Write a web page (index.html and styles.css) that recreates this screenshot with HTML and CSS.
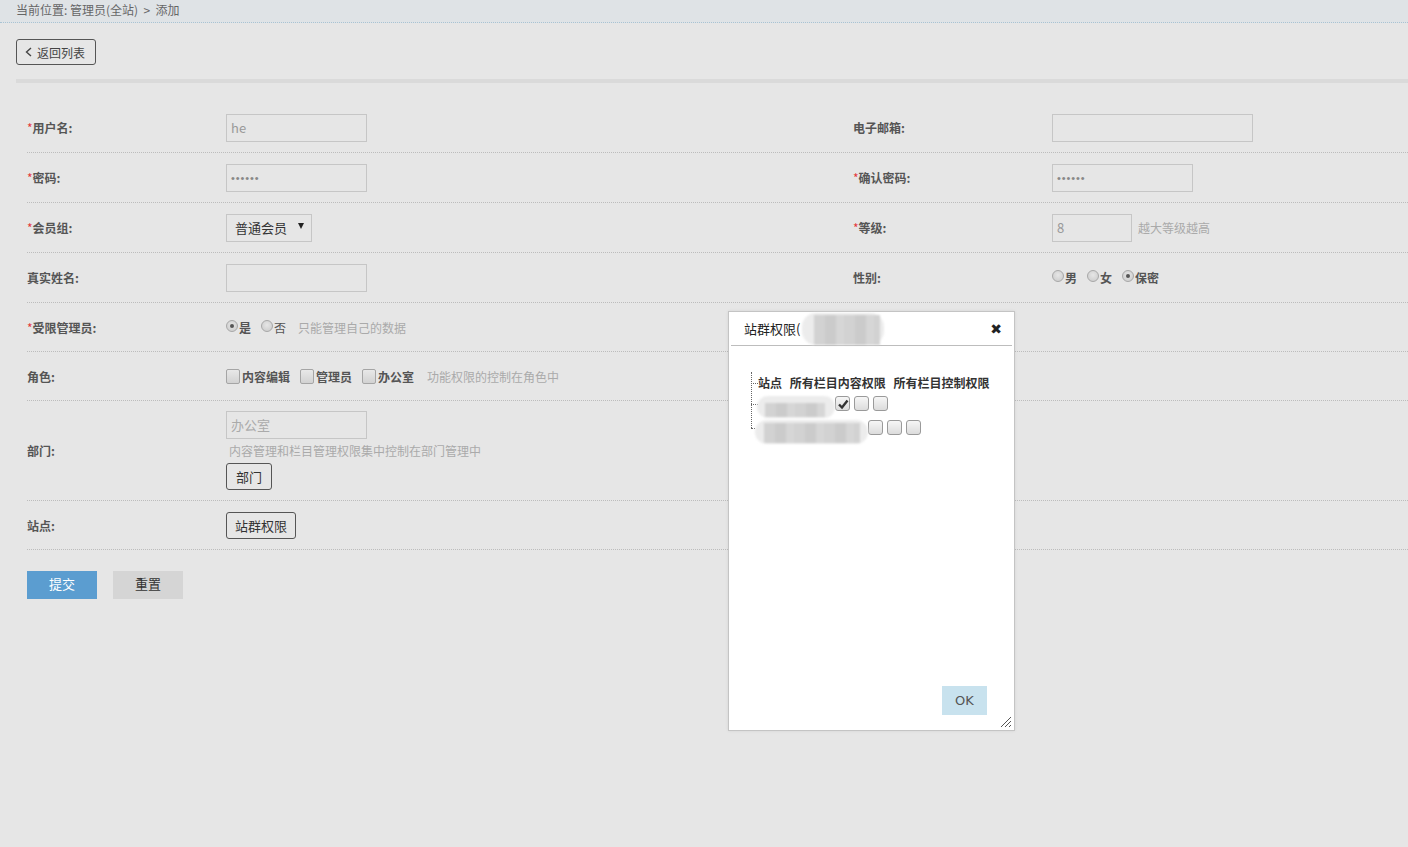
FILE: index.html
```html
<!DOCTYPE html>
<html lang="zh-CN">
<head>
<meta charset="utf-8">
<title>添加管理员</title>
<link rel="stylesheet" href="styles.css">
</head>
<body>
<div class="crumb">当前位置: 管理员(全站) &nbsp;&gt;&nbsp; 添加</div>
<div class="page">
  <div class="toolbar">
    <span class="btn-back"><svg class="chev" width="7" height="10" viewBox="0 0 7 10"><polyline points="6,1 1.5,5 6,9" fill="none" stroke="#444" stroke-width="1.4"/></svg>返回列表</span>
  </div>
  <div class="divider"></div>
  <div class="form">
    <div class="row h50">
      <div class="lbl"><i>*</i>用户名:</div>
      <div class="fld"><span class="inp w141">he</span></div>
      <div class="lbl">电子邮箱:</div>
      <div class="fld"><span class="inp w201"></span></div>
    </div>
    <div class="row h50">
      <div class="lbl"><i>*</i>密码:</div>
      <div class="fld"><span class="inp w141 pwd">••••••</span></div>
      <div class="lbl"><i>*</i>确认密码:</div>
      <div class="fld"><span class="inp w141 pwd">••••••</span></div>
    </div>
    <div class="row h50">
      <div class="lbl"><i>*</i>会员组:</div>
      <div class="fld"><span class="sel">普通会员<span class="arrow"></span></span></div>
      <div class="lbl"><i>*</i>等级:</div>
      <div class="fld"><span class="inp w80">8</span><span class="hint h6">越大等级越高</span></div>
    </div>
    <div class="row h50">
      <div class="lbl">真实姓名:</div>
      <div class="fld"><span class="inp w141"></span></div>
      <div class="lbl">性别:</div>
      <div class="fld opts">
        <span class="opt"><span class="radio"></span>男</span>
        <span class="opt"><span class="radio"></span>女</span>
        <span class="opt"><span class="radio on"></span>保密</span>
      </div>
    </div>
    <div class="row h49">
      <div class="lbl"><i>*</i>受限管理员:</div>
      <div class="fld opts">
        <span class="opt"><span class="radio on"></span>是</span>
        <span class="opt light"><span class="radio"></span>否</span>
        <span class="hint h12">只能管理自己的数据</span>
      </div>
      <div class="lbl"></div>
      <div class="fld"></div>
    </div>
    <div class="row h49">
      <div class="lbl">角色:</div>
      <div class="fld opts">
        <span class="opt"><span class="cbx"></span>内容编辑</span>
        <span class="opt"><span class="cbx"></span>管理员</span>
        <span class="opt"><span class="cbx"></span>办公室</span>
        <span class="hint h13">功能权限的控制在角色中</span>
      </div>
      <div class="lbl"></div>
      <div class="fld"></div>
    </div>
    <div class="row h100">
      <div class="lbl">部门:</div>
      <div class="fld col">
        <span class="inp w141 ph">办公室</span>
        <span class="hint dept">内容管理和栏目管理权限集中控制在部门管理中</span>
        <span class="btn w46">部门</span>
      </div>
      <div class="lbl"></div>
      <div class="fld"></div>
    </div>
    <div class="row h49">
      <div class="lbl">站点:</div>
      <div class="fld"><span class="btn w70">站群权限</span></div>
      <div class="lbl"></div>
      <div class="fld"></div>
    </div>
  </div>
  <div class="actions">
    <span class="submit">提交</span>
    <span class="reset">重置</span>
  </div>
</div>

<div class="dialog">
  <div class="dlg-head">
    <span class="dlg-title">站群权限(<span class="blur hb"><span class="blur-in"></span></span></span>
    <span class="dlg-close">✖</span>
  </div>
  <div class="dlg-body">
    <div class="tree">
      <div class="node head"><span class="conn"></span><b>站点 所有栏目内容权限 所有栏目控制权限</b></div>
      <div class="node n1"><span class="conn"></span><span class="blur b1"><span class="blur-in"></span></span><span class="cb on"><svg width="12" height="12" viewBox="0 0 12 12"><polyline points="2,6.5 5,9.5 10.5,2.5" fill="none" stroke="#333" stroke-width="2.4"/></svg></span><span class="cb"></span><span class="cb"></span></div>
      <div class="node n2"><span class="conn short"></span><span class="blur b2"><span class="blur-in"></span></span><span class="cb"></span><span class="cb"></span><span class="cb"></span></div>
    </div>
  </div>
  <div class="dlg-foot"><span class="ok">OK</span></div>
  <svg class="grip" width="12" height="12" viewBox="0 0 12 12"><path d="M11 1L1 11M11 5L5 11M11 9L9 11" stroke="#555" stroke-width="1" fill="none"/></svg>
</div>
</body>
</html>
```

FILE: styles.css
```css
* { box-sizing: border-box; }
body {
  margin: 0;
  background: #e6e6e6;
  font-family: "Noto Sans CJK SC", "Microsoft YaHei", sans-serif;
  font-size: 12px;
  color: #555;
}
.crumb {
  height: 23px;
  background: #dfe3e6;
  border-bottom: 1px dotted #a9c3d3;
  padding-left: 16px;
  line-height: 20px;
  color: #666;
  font-size: 12px;
}
.page { padding: 16px 0 0 16px; }
.toolbar { height: 26px; }
.btn-back {
  display: inline-flex;
  align-items: center;
  gap: 5px;
  height: 26px;
  width: 80px;
  border: 1px solid #555;
  border-radius: 3px;
  padding-left: 8px;
  color: #444;
  font-size: 12px;
}
.divider { height: 4px; background: #dadada; margin-top: 14px; }
.form { margin: 20px 0 0 11px; }
.row {
  display: grid;
  grid-template-columns: 199px 627px 199px 1fr;
  align-items: center;
  border-bottom: 1px dotted #bcbcbc;
}
.h50 { height: 50px; }
.h49 { height: 49px; }
.h100 { height: 100px; }
.lbl { font-weight: bold; color: #555; font-size: 12px; }
.lbl i { font-style: normal; font-weight: normal; color: #e4393c; }
.fld { display: flex; align-items: center; }
.fld.col { flex-direction: column; align-items: flex-start; }
.inp {
  display: inline-block;
  height: 28px;
  border: 1px solid #c6c6c6;
  padding-left: 4px;
  line-height: 26px;
  color: #999;
  font-size: 13px;
}
.w141 { width: 141px; }
.w201 { width: 201px; }
.w80 { width: 80px; }
.pwd { font-family: "Liberation Sans", sans-serif; font-size: 11px; letter-spacing: 0.9px; color: #888; }
.ph { color: #aaa; }
.sel {
  display: inline-flex;
  align-items: center;
  justify-content: space-between;
  width: 86px;
  height: 28px;
  border: 1px solid #c6c6c6;
  padding: 0 7px 0 8px;
  color: #333;
  font-size: 13px;
}
.arrow {
  width: 0; height: 0;
  border-left: 3px solid transparent;
  border-right: 3px solid transparent;
  border-top: 6px solid #222;
  margin-top: -3px;
}
.hint { color: #aaa; font-size: 12px; }
.h6 { margin-left: 6px; }
.h12 { margin-left: 2px; }
.h13 { margin-left: 3px; }
.dept { line-height: 20px; margin: 2px 0 2px 3px; }
.opts { gap: 10px; }
.opt { display: inline-flex; align-items: center; gap: 1px; font-weight: bold; color: #555; font-size: 12px; }
.opt.light { font-weight: normal; }
.radio {
  width: 12px; height: 12px;
  border-radius: 50%;
  border: 1px solid #a8a8a8;
  background: radial-gradient(circle at 50% 40%, #e6e6e6, #c9c9c9);
  position: relative;
  margin-top: -3px;
}
.radio.on::after {
  content: "";
  position: absolute;
  left: 3px; top: 3px;
  width: 4px; height: 4px;
  border-radius: 50%;
  background: #555;
}
.cbx {
  width: 14px; height: 15px;
  border: 1px solid #a5a5a5;
  border-radius: 2px;
  background: linear-gradient(#e8e8e8, #d2d2d2);
  margin-right: 1px;
}
.btn {
  display: inline-flex;
  align-items: center;
  justify-content: center;
  height: 27px;
  border: 1px solid #555;
  border-radius: 3px;
  color: #333;
  font-size: 13px;
}
.w46 { width: 46px; }
.w70 { width: 70px; }
.actions { display: flex; gap: 16px; margin: 21px 0 0 11px; }
.submit, .reset {
  display: inline-flex;
  align-items: center;
  justify-content: center;
  width: 70px; height: 28px;
  font-size: 13px;
  padding-bottom: 3px;
}
.submit { background: #5b9dd0; color: #fff; }
.reset { background: #d5d5d5; color: #333; }

/* dialog */
.dialog {
  position: absolute;
  left: 728px; top: 311px;
  width: 287px; height: 420px;
  background: #fff;
  border: 1px solid #c4c4c4;
  box-shadow: 0 0 3px rgba(0,0,0,0.08);
  display: flex;
  flex-direction: column;
}
.dlg-head {
  height: 34px;
  margin: 0 2px;
  border-bottom: 1px solid #bdbdbd;
  display: flex;
  align-items: center;
  justify-content: space-between;
  padding: 0 10px 0 13px;
}
.dlg-title { font-size: 13px; color: #222; display: inline-flex; align-items: center; }
.dlg-close { font-size: 14px; color: #222; font-family: "DejaVu Sans", sans-serif; }
.blur { display: inline-block; position: relative; background: #ececec; border-radius: 14px; filter: blur(1px); }
.blur-in { position: absolute; background: repeating-linear-gradient(90deg, #d2d2d2 0 11px, #cbcbcb 11px 22px, #d6d6d6 22px 30px); }
.hb { width: 82px; height: 32px; margin-left: 2px; }
.hb .blur-in { left: 12px; top: 2px; right: 4px; bottom: 0; }
.dlg-body { padding: 26px 0 0 22px; flex: 1; }
.tree { position: relative; padding-left: 0; }
.tree::before {
  content: "";
  position: absolute;
  left: 0; top: 0;
  height: 56px;
  border-left: 1px dotted #666;
}
.node { display: flex; align-items: center; position: relative; }
.conn { width: 7px; border-top: 1px dotted #666; align-self: flex-start; margin-top: 11px; }
.conn.short { width: 4px; }
.head { height: 21px; }
.head b { font-size: 12px; color: #333; word-spacing: 5px; }
.node.n1 { height: 24px; }
.node.n2 { height: 24px; }
.cb {
  width: 15px; height: 15px;
  border: 1px solid #9a9a9a;
  border-radius: 3px;
  background: linear-gradient(#f6f6f6, #dcdcdc);
  margin-right: 4px;
  display: inline-flex;
  align-items: center;
  justify-content: center;
  align-self: flex-start;
  margin-top: 3px;
}
.b1 { width: 78px; height: 22px; margin-top: 3px; align-self: flex-start; margin-left: -1px; }
.b1 .blur-in { left: 8px; top: 7px; right: 10px; bottom: 1px; }
.b2 { width: 113px; height: 24px; margin-left: 0; align-self: flex-start; margin-top: 3px; }
.b2 .blur-in { left: 9px; top: 3px; right: 8px; bottom: 1px; }
.dlg-foot { display: flex; justify-content: flex-end; padding: 0 27px 15px 0; }
.ok {
  display: inline-flex;
  align-items: center;
  justify-content: center;
  width: 45px; height: 29px;
  background: #c8e2ee;
  color: #555;
  font-size: 13px;
  font-family: "DejaVu Sans", sans-serif;
}
.grip { position: absolute; right: 2px; bottom: 2px; }
```
